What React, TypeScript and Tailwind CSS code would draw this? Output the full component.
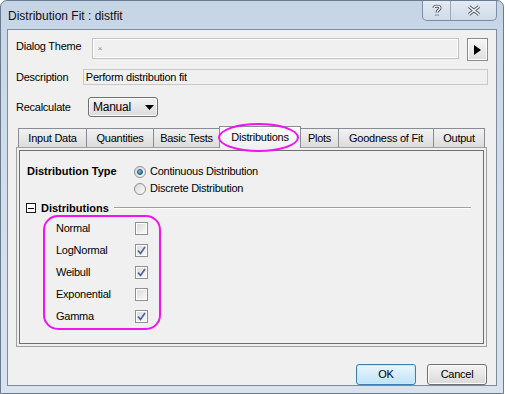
import React from 'react';

const tabs = [
  { name: 'Input Data', w: 'w-[69px]' },
  { name: 'Quantities', w: 'w-[68px]' },
  { name: 'Basic Tests', w: 'w-[67px]' },
  { name: 'Distributions', w: 'w-[82px]', active: true },
  { name: 'Plots', w: 'w-[39px]' },
  { name: 'Goodness of Fit', w: 'w-[96px]' },
  { name: 'Output', w: 'w-[52px]' },
];

const distributions = [
  { name: 'Normal', checked: false },
  { name: 'LogNormal', checked: true },
  { name: 'Weibull', checked: true },
  { name: 'Exponential', checked: false },
  { name: 'Gamma', checked: true },
];

function Radio({ checked }: { checked?: boolean }) {
  return (
    <span className="flex h-[12px] w-[12px] items-center justify-center rounded-full border border-[#8e8f8f] bg-gradient-to-br from-[#d8d8d8] to-[#fbfbfb]">
      {checked && (
        <span className="h-[6px] w-[6px] rounded-full border border-[#1b4f7a] bg-gradient-to-br from-[#8fd0f4] to-[#1e6fa8]" />
      )}
    </span>
  );
}

function Checkbox({ checked }: { checked?: boolean }) {
  return (
    <span className="flex h-[13px] w-[13px] items-center justify-center border border-[#8e8f8f] bg-white p-[1px]">
      <span className="flex h-full w-full items-center justify-center bg-gradient-to-br from-[#dcdcdc] to-[#f8f8f8]">
        {checked && (
          <svg width="9" height="9" viewBox="0 0 9 9">
            <path d="M1 4.5 L3.5 7.5 L8 1" fill="none" stroke="#4a5f97" strokeWidth="1.6" />
          </svg>
        )}
      </span>
    </span>
  );
}

function CaptionButtons() {
  return (
    <div className="mr-[6px] flex h-[20px] self-start overflow-hidden rounded-b-[5px] border border-t-0 border-[#7d8da3] bg-gradient-to-b from-[#e3ebf4] to-[#cfdbe9]">
      <div className="flex w-[28px] items-center justify-center border-r border-[#9aa8ba]">
        <svg width="10" height="13" viewBox="0 0 10 13">
          <path d="M2 4 C2 1.5 8 1.5 8 4 C8 6 5 6 5 8.5 M5 10.5 L5 12" fill="none" stroke="#4d5563" strokeWidth="3" />
          <path d="M2 4 C2 1.5 8 1.5 8 4 C8 6 5 6 5 8.5 M5 10.5 L5 12" fill="none" stroke="#ffffff" strokeWidth="1.2" />
        </svg>
      </div>
      <div className="flex w-[45px] items-center justify-center">
        <svg width="14" height="11" viewBox="0 0 14 11">
          <path d="M2 1.5 L12 9.5 M12 1.5 L2 9.5" fill="none" stroke="#4d5563" strokeWidth="3.4" />
          <path d="M2 1.5 L12 9.5 M12 1.5 L2 9.5" fill="none" stroke="#ffffff" strokeWidth="1.5" />
        </svg>
      </div>
    </div>
  );
}

export default function App() {
  return (
    <div className="h-[394px] w-[505px] bg-white font-['Liberation_Sans',Arial,sans-serif] text-[11px] tracking-[-0.25px] text-black">
      <div className="flex h-[394px] w-[504px] flex-col rounded-t-[7px] border border-[#6b7b8f] bg-gradient-to-b from-[#c6d5e6] via-[#d2deeb] to-[#d9e3ee]">
        {/* title bar */}
        <div className="flex h-[28px] items-start">
          <span className="ml-[7px] mt-[6px] text-[12px] tracking-normal text-[#101010]">Distribution Fit : distfit</span>
          <div className="ml-auto" />
          <CaptionButtons />
        </div>

        {/* client area */}
        <div className="mx-[6px] h-[357px] border border-[#7f8b99] bg-[#f0f0f0] px-[8px] pt-[8px]">
          <div className="flex items-start">
            <span className="mt-[1px] w-[76px] leading-[14px]">Dialog Theme</span>
            <div className="h-[21px] w-[368px] border border-[#c3c3c3] bg-[#f0f0f0] shadow-[inset_0_0_0_1px_#ffffff]">
              <span className="ml-[5px] text-[8px] leading-[14px] text-[#8a8a8a]">×</span>
            </div>
            <button className="ml-[8px] flex h-[23px] w-[21px] items-center justify-center border border-[#8a8a8a] bg-gradient-to-b from-[#f6f6f6] to-[#dedede] shadow-[inset_0_0_0_1px_#ffffff]">
              <svg width="7" height="10" viewBox="0 0 7 10">
                <path d="M0 0 L7 5 L0 10 Z" fill="#000" />
              </svg>
            </button>
          </div>

          <div className="mt-[8px] flex items-center">
            <span className="w-[67px] leading-[14px]">Description</span>
            <div className="flex h-[16px] w-[406px] items-center border border-[#c8c8c8] bg-[#f0f0f0] pl-[2px]">
              Perform distribution fit
            </div>
          </div>

          <div className="mt-[12px] flex items-center">
            <span className="w-[72px] leading-[14px]">Recalculate</span>
            <div className="flex h-[20px] w-[70px] items-center rounded-[3px] border border-[#707070] bg-gradient-to-b from-[#f3f3f3] to-[#dcdcdc] pl-[4px] pr-[3px] shadow-[inset_0_0_0_1px_#fafafa]">
              <span className="flex-1 text-[12px]">Manual</span>
              <svg width="9" height="5" viewBox="0 0 9 5">
                <path d="M0 0 L9 0 L4.5 5 Z" fill="#000" />
              </svg>
            </div>
          </div>

          {/* tabs */}
          <div className="relative mt-[9px] flex h-[21px] items-end pl-[2px]">
            {tabs.map((t) =>
              t.active ? (
                <div
                  key={t.name}
                  className={`${t.w} relative z-10 -mb-[1px] -ml-px flex h-[22px] items-center justify-center border border-b-0 border-[#898c95] bg-gradient-to-b from-[#ffffff] to-[#f0f0f0] pb-[1px]`}
                >
                  {t.name}
                </div>
              ) : (
                <div
                  key={t.name}
                  className={`${t.w} -ml-px flex h-[19px] items-center justify-center border border-b-0 border-[#898c95] bg-gradient-to-b from-[#f2f2f2] to-[#dcdcdc] pt-[1px] first:ml-0`}
                >
                  {t.name}
                </div>
              )
            )}
            <div className="pointer-events-none absolute left-[202px] top-[-3px] z-20 h-[29px] w-[81px] rounded-[50%] border-2 border-[#f312f0]" />
          </div>

          {/* panel */}
          <div className="h-[200px] w-[471px] border border-[#a0a0a0] p-[2px]">
            <div className="h-full border border-[#6f6f6f] pt-[12px]">
              <div className="flex h-[17px] items-center pl-[7px]">
                <span className="w-[107px] font-bold tracking-[0px]">Distribution Type</span>
                <Radio checked />
                <span className="ml-[4px]">Continuous Distribution</span>
              </div>
              <div className="flex h-[17px] items-center pl-[114px]">
                <Radio />
                <span className="ml-[4px]">Discrete Distribution</span>
              </div>

              <div className="mt-[4px] flex h-[14px] items-center pl-[6px] pr-[12px]">
                <span className="flex h-[10px] w-[10px] items-center justify-center border border-[#1a1a1a] bg-white">
                  <span className="h-px w-[6px] bg-black" />
                </span>
                <span className="ml-[5px] font-bold tracking-[0px]">Distributions</span>
                <span className="ml-[5px] h-[2px] flex-1 border-t border-b border-t-[#a0a0a0] border-b-white" />
              </div>

              <div className="relative mt-[2px]">
                {distributions.map((d) => (
                  <div key={d.name} className="flex h-[22px] items-center pl-[36px]">
                    <span className="w-[79px]">{d.name}</span>
                    <Checkbox checked={d.checked} />
                  </div>
                ))}
                <div className="pointer-events-none absolute left-[23px] top-[-2px] h-[115px] w-[118px] rounded-[15px] border-2 border-[#f312f0]" />
              </div>
            </div>
          </div>

          {/* buttons */}
          <div className="mt-[17px] flex justify-end gap-[11px] pr-[1px]">
            <button className="h-[21px] w-[60px] rounded-[3px] border border-[#3c7fb1] bg-gradient-to-b from-[#eaf6fd] to-[#bfe3f8] text-[11px] shadow-[inset_0_0_0_1px_#c6eafc]">
              OK
            </button>
            <button className="h-[21px] w-[60px] rounded-[3px] border border-[#707070] bg-gradient-to-b from-[#f3f3f3] to-[#dadada] text-[11px] shadow-[inset_0_0_0_1px_#fcfcfc]">
              Cancel
            </button>
          </div>
        </div>
      </div>
    </div>
  );
}
